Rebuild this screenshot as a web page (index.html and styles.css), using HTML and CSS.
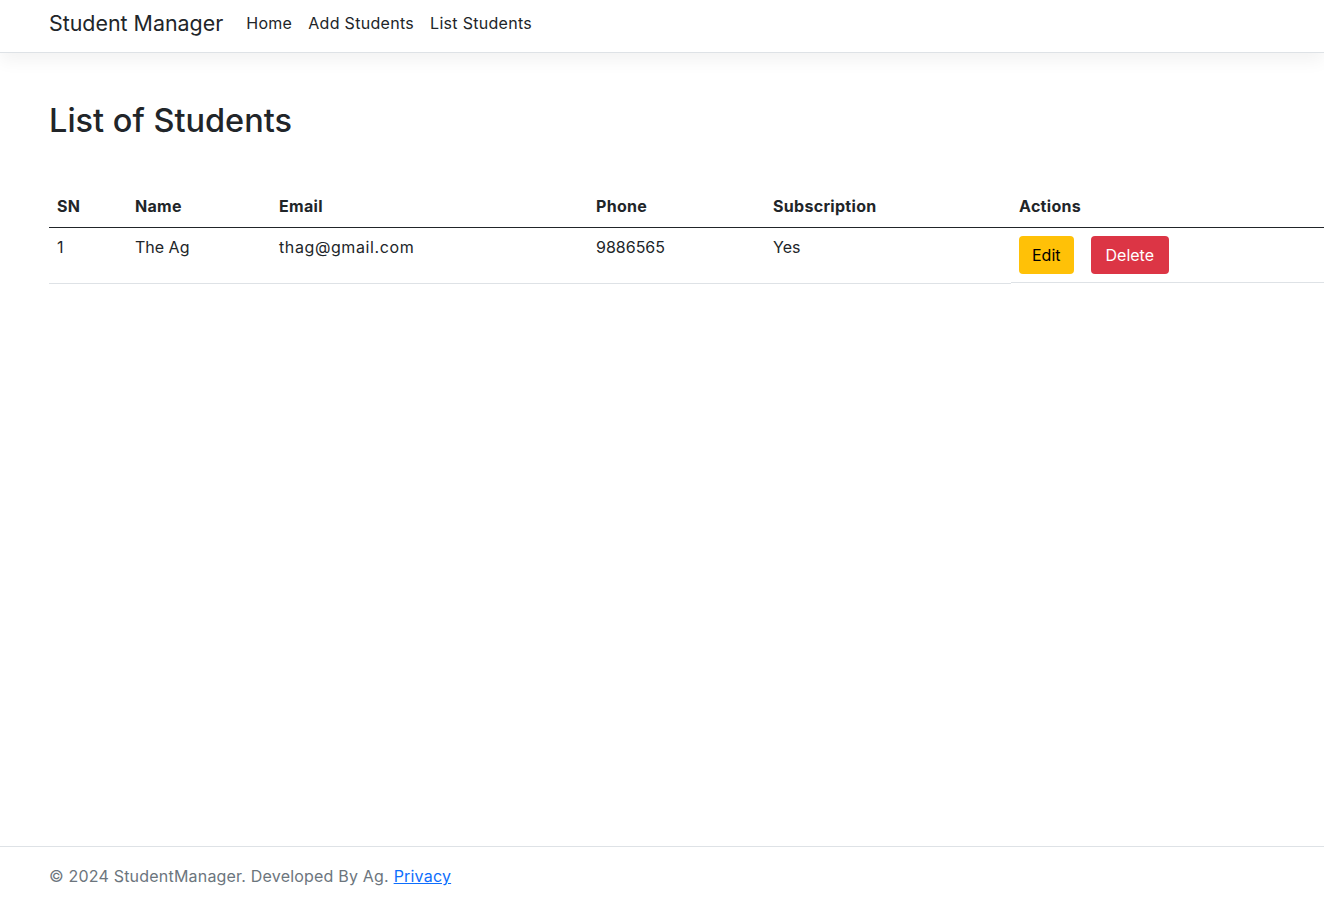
FILE: index.html
```html
<!DOCTYPE html>
<html lang="en">
<head>
<meta charset="utf-8">
<title>Student Manager</title>
<link rel="stylesheet" href="styles.css">
</head>
<body>
<header class="navbar">
  <a class="brand" href="#">Student Manager</a>
  <nav class="nav">
    <a href="#">Home</a>
    <a href="#">Add Students</a>
    <a href="#">List Students</a>
  </nav>
</header>
<main class="main">
  <h1 class="title">List of Students</h1>
  <table class="table">
    <colgroup>
      <col class="c-sn"><col class="c-name"><col class="c-email"><col class="c-phone"><col class="c-sub"><col class="c-act">
    </colgroup>
    <thead>
      <tr><th>SN</th><th>Name</th><th>Email</th><th>Phone</th><th>Subscription</th><th>Actions</th></tr>
    </thead>
    <tbody>
      <tr>
        <td>1</td><td>The Ag</td><td class="email">thag@gmail.com</td><td>9886565</td><td>Yes</td>
        <td class="actions"><a class="btn btn-edit" href="#">Edit</a><a class="btn btn-delete" href="#">Delete</a></td>
      </tr>
    </tbody>
  </table>
</main>
<footer class="footer">
  &copy; 2024 StudentManager. Developed By Ag. <a href="#">Privacy</a>
</footer>
</body>
</html>
```
FILE: styles.css
```css
* { box-sizing: border-box; }
html, body { height: 100%; }
body {
  margin: 0;
  font-family: "Inter", "DejaVu Sans", sans-serif;
  font-size: 16px;
  line-height: 24px;
  color: #212529;
  background: #fff;
  display: flex;
  flex-direction: column;
  overflow: hidden;
}
a { text-decoration: none; color: inherit; }
.navbar {
  height: 53px;
  display: flex;
  align-items: center;
  padding: 0 0 6px 49px;
  border-bottom: 1px solid #dee2e6;
  box-shadow: 0 8px 16px rgba(0,0,0,0.05);
  position: relative;
}
.brand {
  font-size: 21.4px;
  color: #212529;
  margin-right: 15px;
}
.nav { display: flex; }
.nav a {
  padding: 0 8px;
  font-size: 16px;
  letter-spacing: 0.3px;
  color: #212529;
}
.main {
  flex: 1;
  padding: 0 0 0 49px;
}
.title {
  margin: 48px 0 0;
  font-size: 32.5px;
  line-height: 40px;
  font-weight: 500;
}
.table {
  margin-top: 46px;
  width: 100%;
  border-collapse: collapse;
  table-layout: fixed;
}
.c-sn { width: 78px; }
.c-name { width: 144px; }
.c-email { width: 317px; }
.c-phone { width: 177px; }
.c-sub { width: 246px; }
.table th, .table td {
  padding: 7px 8px 9px;
  text-align: left;
  vertical-align: top;
  font-size: 16px;
}
.table th {
  font-weight: 700;
  letter-spacing: 0.3px;
  border-bottom: 1px solid #212529;
}
.table td { border-bottom: 1px solid #dee2e6; }
.table td.email { letter-spacing: 0.6px; }
.table td.actions { display: flex; gap: 17px; padding: 8px; }
.btn {
  display: inline-block;
  padding: 7px 13px;
  font-size: 16px;
  line-height: 24px;
  border-radius: 4px;
}
.btn-edit { background: #ffc107; color: #000; }
.btn-delete { background: #dc3545; color: #fff; padding: 7px 15px; }
.footer {
  border-top: 1px solid #dee2e6;
  padding: 17px 0 0 49px;
  height: 56px;
  color: #6c757d;
  font-size: 16px;
  letter-spacing: 0.2px;
}
.footer a { color: #0d6efd; text-decoration: underline; }
```
